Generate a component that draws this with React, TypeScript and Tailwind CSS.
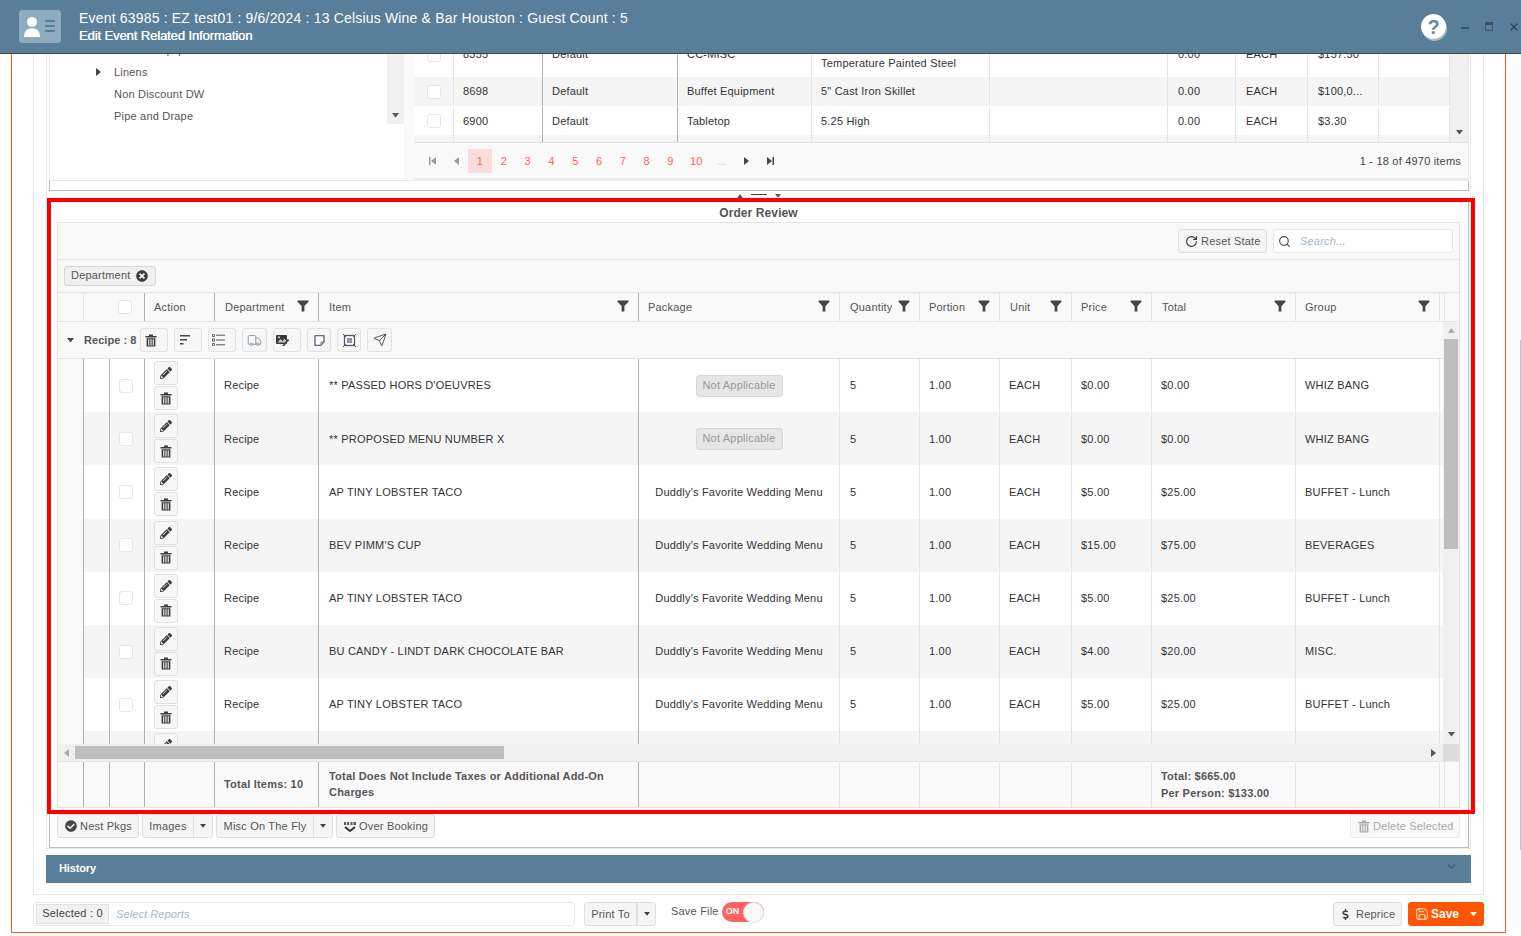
import React from "react";
import { Truck, Send, RotateCw, Search, ChevronDown, Save, X } from "lucide-react";
import { FaPencilAlt, FaCheckCircle, FaTimesCircle, FaDollarSign } from "react-icons/fa";

const Funnel = () => (
  <svg width="12" height="12" viewBox="0 0 12 12" className="shrink-0">
    <path d="M0.5 0.5H11.5V1.8L7.4 6V11.5H4.6V6L0.5 1.8Z" fill="#444" />
  </svg>
);

const Trash = ({ color = "#3d3d3d" }: { color?: string }) => (
  <svg width="12" height="13" viewBox="0 0 12 13">
    <path d="M4 0.5H8V2H11.5V3.4H0.5V2H4Z" fill={color} />
    <path d="M1.6 4.2H10.4V12.5H1.6ZM3.2 5.2V11.4H4.3V5.2ZM5.45 5.2V11.4H6.55V5.2ZM7.7 5.2V11.4H8.8V5.2Z" fill={color} fillRule="evenodd" />
  </svg>
);

const TriDown = ({ c = "#444", w = 8 }: { c?: string; w?: number }) => (
  <svg width={w} height={w * 0.65} viewBox="0 0 8 5"><path d="M0 0H8L4 5Z" fill={c} /></svg>
);

const TriRight = ({ c = "#444" }: { c?: string }) => (
  <svg width="5" height="8" viewBox="0 0 5 8"><path d="M0 0V8L5 4Z" fill={c} /></svg>
);

const TriLeft = ({ c = "#999" }: { c?: string }) => (
  <svg width="5" height="8" viewBox="0 0 5 8"><path d="M5 0V8L0 4Z" fill={c} /></svg>
);

const First = () => (
  <svg width="7" height="8" viewBox="0 0 7 8"><path d="M0 0H1.5V8H0ZM7 0V8L2 4Z" fill="#999" /></svg>
);

const Last = () => (
  <svg width="7" height="8" viewBox="0 0 7 8"><path d="M0 0V8L5 4ZM5.5 0H7V8H5.5Z" fill="#444" /></svg>
);

const Check = () => <span className="block w-[14px] h-[14px] rounded-[3px] border border-[#e6e6e6] bg-white shrink-0" />;

const GroupBtn = ({ w, children }: { w: string; children: React.ReactNode }) => (
  <span className={`flex items-center h-[24px] rounded-[3px] border border-[#e2e2e2] bg-[#f7f7f7] ${w}`}>{children}</span>
);

const BarBtn = ({ className = "", children }: { className?: string; children: React.ReactNode }) => (
  <span className={`flex items-center h-[24px] rounded-[3px] border border-[#e0e0e0] bg-[#f5f5f5] text-[#555] ${className}`}>{children}</span>
);

const topCols = "grid grid-cols-[40px_89px_135px_134px_178px_178px_68px_72px_71px_71px] grid-rows-[1fr]";
const tableCols = "grid grid-cols-[26px_26px_35px_70px_104px_320px_201px_80px_80px_72px_80px_144px_144px_3px]";

const topRows = [
  { id: "8355", a: "Default", b: "CC-MISC", c: "Temperature Painted Steel", d: "0.00", e: "EACH", f: "$157.50", bg: "bg-white", h: "h-[23px]", first: true },
  { id: "8698", a: "Default", b: "Buffet Equipment", c: '5" Cast Iron Skillet', d: "0.00", e: "EACH", f: "$100,0...", bg: "bg-[#f5f5f5]", h: "h-[29px]" },
  { id: "6900", a: "Default", b: "Tabletop", c: "5.25 High", d: "0.00", e: "EACH", f: "$3.30", bg: "bg-white pt-[1px]", h: "h-[29px]" },
];

const pkg = "Duddly's Favorite Wedding Menu";
const rows = [
  ["** PASSED HORS D'OEUVRES", "", "$0.00", "$0.00", "WHIZ BANG"],
  ["** PROPOSED MENU NUMBER X", "", "$0.00", "$0.00", "WHIZ BANG"],
  ["AP TINY LOBSTER TACO", pkg, "$5.00", "$25.00", "BUFFET - Lunch"],
  ["BEV PIMM'S CUP", pkg, "$15.00", "$75.00", "BEVERAGES"],
  ["AP TINY LOBSTER TACO", pkg, "$5.00", "$25.00", "BUFFET - Lunch"],
  ["BU CANDY - LINDT DARK CHOCOLATE BAR", pkg, "$4.00", "$20.00", "MISC."],
  ["AP TINY LOBSTER TACO", pkg, "$5.00", "$25.00", "BUFFET - Lunch"],
  ["", "", "", "", ""],
];

const dark = "border-r border-[#b0b0b0]";
const light = "border-r border-[#e5e5e5]";

const heads: [string, string, boolean, string][] = [
  ["Action", "border-[#b0b0b0]", false, "pl-[9px]"],
  ["Department", "border-[#b0b0b0]", true, "pl-[10px]"],
  ["Item", "border-[#b0b0b0]", true, "pl-[10px]"],
  ["Package", "border-[#e5e5e5]", true, "pl-[9px]"],
  ["Quantity", "border-[#e5e5e5]", true, "pl-[10px]"],
  ["Portion", "border-[#e5e5e5]", true, "pl-[9px]"],
  ["Unit", "border-[#e5e5e5]", true, "pl-[10px]"],
  ["Price", "border-[#e5e5e5]", true, "pl-[9px]"],
  ["Total", "border-[#e5e5e5]", true, "pl-[10px]"],
  ["Group", "border-[#e5e5e5]", true, "pl-[9px]"],
];

export default function App() {
  return (
    <div className="relative w-[1521px] h-[936px] overflow-hidden bg-white font-['Liberation_Sans',Arial,sans-serif] text-[11px] tracking-[0.2px] text-[#333]">
      {/* title bar */}
      <header className="relative z-10 h-[54px] flex items-center bg-[#587e99] border-b border-[#3a4650] pl-[19px] text-white tracking-normal">
        <svg width="42" height="33" viewBox="0 0 42 33" className="shrink-0">
          <rect width="42" height="33" rx="3" fill="#8fabbf" />
          <circle cx="13" cy="12" r="5" fill="#fff" />
          <path d="M5 27C5 20 9 18.5 13 18.5S21 20 21 27Z" fill="#fff" />
          <rect x="26" y="10" width="10" height="2" fill="#587e99" />
          <rect x="26" y="15" width="10" height="2" fill="#587e99" />
          <rect x="26" y="20" width="10" height="2" fill="#587e99" />
        </svg>
        <div className="ml-[18px] flex flex-col">
          <span className="text-[14px] leading-[17px] tracking-[0.18px]">Event 63985 : EZ test01 : 9/6/2024 : 13 Celsius Wine &amp; Bar Houston : Guest Count : 5</span>
          <span className="text-[13px] leading-[17px] tracking-[-0.1px] [text-shadow:0.2px_0_0_#fff]">Edit Event Related Information</span>
        </div>
        <div className="ml-auto flex items-center pr-[1px]">
          <span className="flex items-center justify-center w-[25px] h-[25px] rounded-full bg-white shadow-[1px_2px_0_#aab8c4] text-[#6f8799] text-[20px] font-bold">?</span>
          <span className="ml-[15px] mt-[3px] w-[8px] h-[2px] bg-[#3e5362]" />
          <span className="ml-[16px] w-[8px] h-[9px] border border-t-[3px] border-[#3e5362]" />
          <X size={12} strokeWidth={2.5} color="#33444f" className="ml-[15px]" />
        </div>
      </header>

      {/* orange frame */}
      <div className="ml-[11px] w-[1495px] h-[879px] border-x border-b border-[#ff5a14] px-[21px] flex flex-col">
        <div className="h-[841px] shrink-0 border-x border-b border-[#e8e8e8] px-[12px] flex flex-col">
          <div className="h-[795px] shrink-0 border-x border-b border-[#e8e8e8] pl-[2px] pr-[1px] flex flex-col">
            {/* upper: tree + catalogue */}
            <div className="h-[127px] shrink-0 flex border-x border-b border-[#e8e8e8] overflow-hidden">
              <div className="w-[354px] shrink-0 flex">
                <div className="flex-1 text-[#555] overflow-hidden">
                  <div className="-mt-[15px]">
                    {["Kitchen Equipment", "Linens", "Non Discount DW", "Pipe and Drape"].map((t) => (
                      <div key={t} className="h-[22px] flex items-center pl-[64px] relative">
                        {t === "Linens" && <span className="absolute left-[46px]"><TriRight /></span>}
                        {t}
                      </div>
                    ))}
                  </div>
                </div>
                <div className="w-[17px] h-[70px] bg-[#f1f1f1] flex items-end justify-center pb-[6px]"><TriDown c="#555" w={7} /></div>
              </div>
              <div className="w-[10px] shrink-0 bg-[#fafafa]" />
              <div className="flex-1 flex flex-col min-w-0">
                <div className="h-[88px] shrink-0 flex overflow-hidden">
                  <div className="w-[1036px] shrink-0">
                    {topRows.map((r) => (
                      <div key={r.id} className={`${topCols} ${r.h} ${r.bg} overflow-hidden`}>
                        <div className={`${light} flex justify-center overflow-hidden ${r.first ? "items-end pb-[15px]" : "items-center"}`}><Check /></div>
                        {[r.id, r.a, r.b].map((v, i) => (
                          <div key={i} className={`${i < 2 ? dark : light} pl-[9px] flex overflow-hidden ${r.first ? "items-end pb-[15px]" : "items-center"}`}>{v}</div>
                        ))}
                        <div className={`${light} pl-[9px] flex overflow-hidden ${r.first ? "items-end pb-[6px]" : "items-center"}`}>{r.c}</div>
                        <div className={light} />
                        {[r.d, r.e, r.f].map((v, i) => (
                          <div key={i} className={`${light} pl-[10px] flex overflow-hidden ${r.first ? "items-end pb-[15px]" : "items-center"}`}>{v}</div>
                        ))}
                        <div className={light} />
                      </div>
                    ))}
                    <div className={`${topCols} h-[7px] bg-[#f5f5f5]`}>
                      {[light, dark, dark, light, light, light, light, light, light, light].map((c, i) => <div key={i} className={c} />)}
                    </div>
                  </div>
                  <div className="flex-1 bg-[#f0f0f0] flex items-end justify-center pb-[7px]"><TriDown c="#555" w={7} /></div>
                </div>
                <div className="h-[38px] shrink-0 border-t border-b-2 border-t-[#e2e2e2] border-b-[#ececec] bg-[#f9f9f9] flex items-center pl-[15px] pr-[7px]">
                  <First />
                  <span className="ml-[18px]"><TriLeft /></span>
                  <span className="ml-[9px] pt-[1px] w-[24px] h-[24px] bg-[#fbdcdc] text-[#ff6262] flex items-center justify-center">1</span>
                  <div className="flex text-[#ff6262] pt-[1px]">
                    {["2", "3", "4", "5", "6", "7", "8", "9"].map((p) => (
                      <span key={p} className="w-[23.8px] text-center">{p}</span>
                    ))}
                    <span className="ml-[1px] w-[26px] text-center">10</span>
                    <span className="ml-[1px] w-[23px] text-center text-[#ffb0b0]">...</span>
                  </div>
                  <span className="ml-[11px]"><TriRight /></span>
                  <span className="ml-[18px]"><Last /></span>
                  <span className="ml-auto pt-[1px] text-[#444]">1 - 18 of 4970 items</span>
                </div>
              </div>
            </div>
            <div className="h-[10px] shrink-0 border-x border-b border-[#bbb]" />
            <div className="h-[7px] shrink-0 flex items-start justify-center gap-[8px] pt-[3px]">
              <svg width="6" height="4" viewBox="0 0 6 4"><path d="M3 0L6 4H0Z" fill="#555" /></svg>
              <span className="w-[16px] h-[1px] bg-[#444]" />
              <TriDown c="#555" w={6} />
            </div>

            {/* lower: order review */}
            <div className="h-[650px] shrink-0 border-x border-b border-[#bbb] pl-[7px] pr-[8px] flex flex-col">
              <div className="h-[24px] shrink-0 flex items-end justify-center text-[12px] font-bold text-[#555] tracking-[0.1px]">Order Review</div>
              <div className="h-[586px] shrink-0 border border-[#e5e5e5] flex flex-col">
                {/* toolbar */}
                <div className="h-[37px] shrink-0 bg-[#f9f9f9] border-b border-[#e5e5e5] flex items-center justify-end pr-[6px]">
                  <BarBtn className="w-[89px] pl-[6px] gap-[3px] text-[#555]"><RotateCw size={13} color="#333" strokeWidth={2} /> Reset State</BarBtn>
                  <div className="ml-[6px] w-[180px] h-[24px] rounded-[3px] border border-[#e8e8e8] bg-white flex items-center pl-[4px]">
                    <Search size={13} color="#444" strokeWidth={2} />
                    <span className="ml-[9px] italic text-[#a3b8c6]">Search...</span>
                  </div>
                </div>
                {/* group bar */}
                <div className="h-[33px] shrink-0 bg-[#f9f9f9] border-b border-[#e5e5e5] flex items-center pl-[6px]">
                  <span className="flex items-center w-[92px] h-[20px] pl-[6px] rounded-[3px] border border-[#d8d8d8] bg-[#f0f0f0] text-[#555] gap-[6px]">
                    <span className="pb-[2px]">Department</span> <FaTimesCircle size={12} color="#3d3d3d" />
                  </span>
                </div>
                {/* header */}
                <div className="h-[29px] shrink-0 bg-[#f9f9f9] border-b border-[#e5e5e5] grid grid-cols-[26px_61px_70px_104px_320px_201px_80px_80px_72px_80px_144px_144px_5px_14px] text-[#555]">
                  <div className={light} />
                  <div className={`${dark} flex items-center pl-[34px]`}><Check /></div>
                  {heads.map(([t, b, f, p]) => (
                    <div key={t} className={`border-r ${b} flex items-center ${p} pr-[9px] justify-between`}>
                      <span>{t}</span>
                      {f && <span className="-mt-[3px]"><Funnel /></span>}
                    </div>
                  ))}
                  <div className={light} />
                  <div />
                </div>
                {/* body */}
                <div className="h-[422px] shrink-0 flex">
                  <div className="w-[1385px] shrink-0 overflow-hidden">
                    <div className="h-[37px] bg-[#f9f9f9] border-b border-[#e5e5e5] flex items-center">
                      <span className="ml-[9px]"><TriDown c="#444" w={7} /></span>
                      <span className="ml-[10px] w-[56px] font-bold text-[#555] tracking-[0.05px]">Recipe : 8</span>
                      <div className="flex gap-[6px]">
                        <GroupBtn w="w-[28px] pl-[4px]"><Trash /></GroupBtn>
                        <GroupBtn w="w-[28px] pl-[5px]">
                          <svg width="10" height="10" viewBox="0 0 10 10"><path d="M0 0H10V1.5H0ZM0 4H7V5.5H0ZM0 8H3.5V9.5H0Z" fill="#444" /></svg>
                        </GroupBtn>
                        <GroupBtn w="w-[28px] pl-[3px]">
                          <svg width="13" height="12" viewBox="0 0 13 12"><path d="M4 1.2H13M4 6H13M4 10.8H13" stroke="#555" strokeWidth="1" /><path d="M0.5 0.2H2.5V2.5H0.5ZM0.5 4.8H2.5V7.2H0.5ZM0.5 9.5H2.5V11.8H0.5Z" fill="none" stroke="#444" strokeWidth="0.8" /></svg>
                        </GroupBtn>
                        <GroupBtn w="w-[25px] justify-center"><Truck size={15} color="#6d8595" strokeWidth={1.2} /></GroupBtn>
                        <GroupBtn w="w-[28px] pl-[2px]">
                          <svg width="13" height="12" viewBox="0 0 13 12"><rect x="0" y="1" width="11" height="9" rx="1" fill="#3a3a3a" /><path d="M1.5 8.5L4.5 5L6.5 7.2L8.5 4.5L10 6.5V8.5Z" fill="#c9c9c9" /><circle cx="3" cy="3.3" r="1" fill="#ddd" /><path d="M7 12L12.5 5.5" stroke="#444" strokeWidth="1.8" /></svg>
                        </GroupBtn>
                        <GroupBtn w="w-[24px] justify-center">
                          <svg width="11" height="11" viewBox="0 0 11 11"><path d="M1 0.7H10V7L7 10.3H1Z" fill="#fff" stroke="#4d3566" strokeWidth="1.1" /><path d="M10 7H7V10.3" fill="none" stroke="#8a7a3a" strokeWidth="1" /></svg>
                        </GroupBtn>
                        <GroupBtn w="w-[24px] justify-center">
                          <svg width="13" height="13" viewBox="0 0 13 13"><rect x="1.5" y="1.5" width="10" height="10" fill="none" stroke="#556" strokeWidth="1.2" /><rect x="4" y="4" width="5" height="5" fill="#8e9aa6" /><path d="M0 0L3 3M13 0L10 3M0 13L3 10M13 13L10 10" stroke="#556" /></svg>
                        </GroupBtn>
                        <GroupBtn w="w-[25px] justify-center"><Send size={14} color="#333" strokeWidth={1.4} /></GroupBtn>
                      </div>
                    </div>
                    {rows.map((r, i) => (
                      <div key={i} className={`${tableCols} h-[53.2px] ${i % 2 ? "bg-[#f5f5f5]" : "bg-white"}`}>
                        <div className={`${dark} bg-[#f9f9f9]`} />
                        <div className={dark} />
                        <div className={`${dark} flex items-center pl-[9px]`}>{r[0] && <Check />}</div>
                        <div className={`${dark} flex flex-col pl-[9px] pt-[2px] gap-[1px]`}>
                          <span className="w-[24px] h-[24px] rounded-[3px] border border-[#e0e0e0] bg-[#f7f7f7] flex items-center justify-center shrink-0"><FaPencilAlt size={12} color="#3d3d3d" /></span>
                          <span className="w-[24px] h-[24px] rounded-[3px] border border-[#e0e0e0] bg-[#f7f7f7] flex items-center justify-center shrink-0"><Trash /></span>
                        </div>
                        <div className={`${dark} flex items-center pl-[9px]`}>{r[0] && "Recipe"}</div>
                        <div className={`${dark} flex items-center pl-[10px]`}>{r[0]}</div>
                        <div className={`${light} flex items-center justify-center`}>
                          {r[0] && (r[1] || <span className="flex items-center justify-center w-[87px] h-[22px] pb-[1px] rounded-[3px] border border-[#d8d8d8] bg-[#e6e6e6] text-[#999]">Not Applicable</span>)}
                        </div>
                        <div className={`${light} flex items-center pl-[10px]`}>{r[0] && "5"}</div>
                        <div className={`${light} flex items-center pl-[9px]`}>{r[0] && "1.00"}</div>
                        <div className={`${light} flex items-center pl-[9px]`}>{r[0] && "EACH"}</div>
                        <div className={`${light} flex items-center pl-[9px]`}>{r[2]}</div>
                        <div className={`${light} flex items-center pl-[9px]`}>{r[3]}</div>
                        <div className={`${light} flex items-center pl-[9px]`}>{r[4]}</div>
                        <div />
                      </div>
                    ))}
                  </div>
                  <div className="flex-1 bg-[#f0f0f0] flex flex-col items-center pt-[6px] px-[1px]">
                    <svg width="7" height="5" viewBox="0 0 8 5"><path d="M4 0L8 5H0Z" fill="#aaa" /></svg>
                    <div className="w-full h-[210px] mt-[6px] bg-[#bebebe]" />
                    <div className="mt-auto mb-[7px]"><TriDown c="#555" w={7} /></div>
                  </div>
                </div>
                {/* horizontal scrollbar */}
                <div className="h-[17px] shrink-0 flex bg-[#f0f0f0]">
                  <div className="w-[1385px] shrink-0 flex items-center pl-[6px]">
                    <TriLeft c="#aaa" />
                    <div className="ml-[6px] w-[429px] h-[13px] bg-[#bebebe]" />
                    <span className="ml-auto mr-[7px]"><TriRight c="#555" /></span>
                  </div>
                  <div className="flex-1 bg-[#dcdcdc]" />
                </div>
                {/* footer */}
                <div className="flex-1 bg-[#f9f9f9] border-t border-[#e5e5e5] grid grid-cols-[26px_26px_35px_70px_104px_320px_201px_80px_80px_72px_80px_144px_144px_5px_14px] font-bold text-[#555]">
                  <div className={dark} />
                  <div className={dark} />
                  <div className={dark} />
                  <div className={dark} />
                  <div className={`${dark} flex items-center pl-[9px]`}>Total Items: 10</div>
                  <div className={`${dark} flex items-center pl-[10px] pb-[1px] leading-[16px]`}>Total Does Not Include Taxes or Additional Add-On Charges</div>
                  {[0, 1, 2, 3, 4].map((k) => <div key={k} className={light} />)}
                  <div className={`${light} flex flex-col justify-center pl-[9px] leading-[17px]`}>
                    <span>Total: $665.00</span>
                    <span>Per Person: $133.00</span>
                  </div>
                  <div className={light} />
                  <div className={light} />
                  <div />
                </div>
              </div>
              {/* action buttons */}
              <div className="mt-[6px] flex gap-[3px] items-start">
                <BarBtn className="w-[82px] pl-[7px] gap-[3px]"><FaCheckCircle size={12} color="#444" /> Nest Pkgs</BarBtn>
                <BarBtn className="w-[71px]">
                  <span className="w-[50px] text-center">Images</span>
                  <span className="flex-1 self-stretch border-l border-[#e0e0e0] flex items-center justify-center"><TriDown c="#444" w={6} /></span>
                </BarBtn>
                <BarBtn className="w-[117px]">
                  <span className="w-[96px] text-center">Misc On The Fly</span>
                  <span className="flex-1 self-stretch border-l border-[#e0e0e0] flex items-center justify-center"><TriDown c="#444" w={6} /></span>
                </BarBtn>
                <BarBtn className="w-[99px] pl-[6px] gap-[2px]">
                  <svg width="14" height="11" viewBox="0 0 14 11"><path d="M1 1H3V4H1ZM4 1H6V4H4ZM7.5 1H9.5V4H7.5ZM10.5 1H13V4H10.5Z" fill="#555" /><path d="M2 6L7 10L12 6" fill="none" stroke="#333" strokeWidth="2" /></svg>
                  Over Booking
                </BarBtn>
                <span className="ml-auto flex items-center h-[24px] w-[110px] pl-[7px] gap-[3px] rounded-[3px] border border-[#ececec] bg-[#f9f9f9] text-[#aaa]">
                  <Trash color="#aaa" /> Delete Selected
                </span>
              </div>
            </div>
          </div>

          {/* history */}
          <div className="mt-[6px] h-[28px] shrink-0 bg-[#587e99] flex items-center pl-[13px] pr-[13px] justify-between text-white font-bold tracking-[-0.15px]">
            <span className="pb-[2px]">History</span>
            <span className="-mt-[5px]"><ChevronDown size={13} color="#3e5362" /></span>
          </div>
        </div>

        {/* bottom bar */}
        <div className="pt-[7px] flex items-start">
          <div className="w-[542px] h-[24px] rounded-[3px] border border-[#e8e8e8] bg-white flex items-center pl-[2px]">
            <span className="flex items-center justify-center w-[73px] h-[20px] pb-[2px] bg-[#f2f2f2] border border-[#e2e2e2] text-[#444]">Selected : 0</span>
            <span className="ml-[7px] italic text-[#a3b8c6] tracking-[0.1px]">Select Reports</span>
          </div>
          <BarBtn className="ml-[9px] w-[72px]">
            <span className="w-[51px] text-center">Print To</span>
            <span className="flex-1 self-stretch border-l-2 border-[#e0e0e0] flex items-center justify-center"><TriDown c="#444" w={6} /></span>
          </BarBtn>
          <span className="ml-[15px] mt-[1px] text-[#555]">Save File</span>
          <span className="ml-[3px] w-[42px] h-[20px] rounded-full bg-[#ff625f] flex items-center justify-between pl-[4px]">
            <span className="text-[9px] font-bold text-white">ON</span>
            <span className="w-[21px] h-[21px] rounded-full bg-[#f9f9f9] border border-[#e4e4e4]" />
          </span>
          <span className="ml-auto flex items-center h-[24px] w-[69px] pl-[6px] gap-[5px] rounded-[3px] border border-[#e0e0e0] bg-[#f5f5f5] text-[#555]">
            <FaDollarSign size={11} color="#444" /> Reprice
          </span>
          <span className="ml-[6px] flex items-center h-[24px] w-[76px] pl-[7px] rounded-[3px] bg-[#ff5500] text-white font-bold text-[12px] tracking-normal">
            <Save size={14} color="#fff" strokeWidth={1.5} />
            <span className="ml-[2px]">Save</span>
            <span className="ml-auto mr-[7px]"><TriDown c="#fff" w={7} /></span>
          </span>
        </div>
      </div>

      {/* red annotation drawn over the screenshot */}
      <div className="absolute left-[47px] top-[198px] w-[1428px] h-[616px] border-4 border-[#ff0000] pointer-events-none z-20" />
      {/* neighbouring window edge */}
      <div className="absolute right-0 top-[340px] w-[1px] h-[510px] bg-[#c4c4c4]" />
    </div>
  );
}
